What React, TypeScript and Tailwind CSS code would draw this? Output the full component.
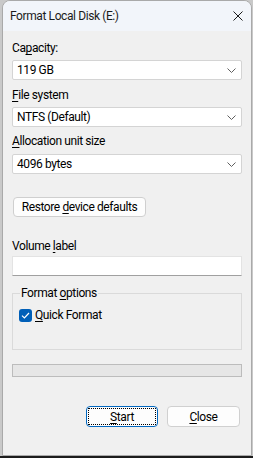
import React from 'react'

const font = { fontFamily: 'Roboto, "Liberation Sans", Arial, sans-serif' }

const Chevron: React.FC = () => (
  <svg width="9" height="5" viewBox="0 0 9 5" className="shrink-0">
    <polyline points="0.5,0.5 4.5,4.5 8.5,0.5" fill="none" stroke="#5f5f5f" strokeWidth="1" />
  </svg>
)

const Select: React.FC<{ value: string }> = ({ value }) => (
  <div className="h-[20px] bg-white border border-[#d4d4d4] rounded-[2px] flex items-center pl-[4px] pr-[5px]">
    <span className="flex-1 text-[12px] text-black leading-none">{value}</span>
    <Chevron />
  </div>
)

// label with an access-key underline on one letter
const Key: React.FC<{ pre?: string; k: string; post?: string }> = ({ pre, k, post }) => (
  <>
    {pre}
    <span className="underline underline-offset-[2px] decoration-[1px]">{k}</span>
    {post}
  </>
)

const Label: React.FC<{ children: React.ReactNode; className?: string }> = ({ children, className }) => (
  <div className={`text-[12px] leading-[15px] text-black ${className ?? ''}`}>{children}</div>
)

export default function App() {
  return (
    <div className="w-[253px] h-[458px] bg-[#c9c9c9] flex flex-col tracking-[-0.4px]" style={font}>
      <div className="flex-1 pl-[2px] pr-[1px]">
        <div className="h-[456px] bg-[#f0f0f0] border border-[#a9a9a9] rounded-t-[8px] flex flex-col overflow-hidden">
          {/* title bar */}
          <div className="h-[30px] shrink-0 bg-[#f2f5fa] flex items-center pl-[7px] pr-[8px]">
            <span className="flex-1 text-[12px] text-[#1b1b1b]">Format Local Disk (E:)</span>
            <svg width="10" height="10" viewBox="0 0 10 10">
              <path d="M0.5 0.5 L9.5 9.5 M9.5 0.5 L0.5 9.5" stroke="#1b1b1b" strokeWidth="1" />
            </svg>
          </div>

          <div className="px-[9px] flex flex-col">
            <Label className="mt-[10px]">
              <Key pre="Ca" k="p" post="acity:" />
            </Label>
            <div className="mt-[4px]">
              <Select value="119 GB" />
            </div>

            <Label className="mt-[8px]">
              <Key k="F" post="ile system" />
            </Label>
            <div className="mt-[4px]">
              <Select value="NTFS (Default)" />
            </div>

            <Label className="mt-[7px]">
              <Key k="A" post="llocation unit size" />
            </Label>
            <div className="mt-[5px]">
              <Select value="4096 bytes" />
            </div>

            <div className="mt-[23px] ml-[1px] flex">
              <button className="h-[20px] w-[133px] bg-[#fdfdfd] border border-[#cfcfcf] rounded-[4px] text-[12px] text-black leading-none">
                <Key pre="Restore " k="d" post="evice defaults" />
              </button>
            </div>

            <Label className="mt-[22px]">
              <Key pre="Volume " k="l" post="abel" />
            </Label>
            <div className="mt-[2px] h-[20px] bg-white border border-[#e3e3e3] border-b-[#a0a0a0]" />

            {/* format options group */}
            <div className="relative mt-[17px] h-[57px] border border-[#dadada] pt-[14px] pl-[6px]">
              <span className="absolute -top-[8px] left-[7px] bg-[#f0f0f0] px-[1px] text-[12px] leading-[15px] text-black">
                <Key pre="Format " k="o" post="ptions" />
              </span>
              <div className="flex items-center gap-[3px]">
                <div className="w-[13px] h-[13px] rounded-[3px] bg-[#005fb8] flex items-center justify-center">
                  <svg width="9" height="7" viewBox="0 0 9 7">
                    <polyline points="1,3.6 3.4,6 8,1" fill="none" stroke="#ffffff" strokeWidth="1.2" />
                  </svg>
                </div>
                <span className="text-[12px] leading-[15px] text-black">
                  <Key k="Q" post="uick Format" />
                </span>
              </div>
            </div>

            <div className="mt-[14px] h-[13px] bg-[#e6e6e6] border border-[#bcbcbc]" />

            <div className="mt-[29px] flex justify-end gap-[9px] pr-[2px]">
              <button className="h-[21px] w-[72px] bg-[#fdfdfd] border border-[#0067c0] rounded-[4px] p-[1px]">
                <div className="h-full w-full border border-dotted border-black flex items-center justify-center text-[12px] text-black leading-none">
                  <Key k="S" post="tart" />
                </div>
              </button>
              <button className="h-[21px] w-[73px] bg-[#fdfdfd] border border-[#d0d0d0] rounded-[4px] flex items-center justify-center text-[12px] text-black leading-none">
                <Key k="C" post="lose" />
              </button>
            </div>
          </div>
        </div>
      </div>
      <div className="h-[2px] bg-[#1c1c1c]" />
    </div>
  )
}
